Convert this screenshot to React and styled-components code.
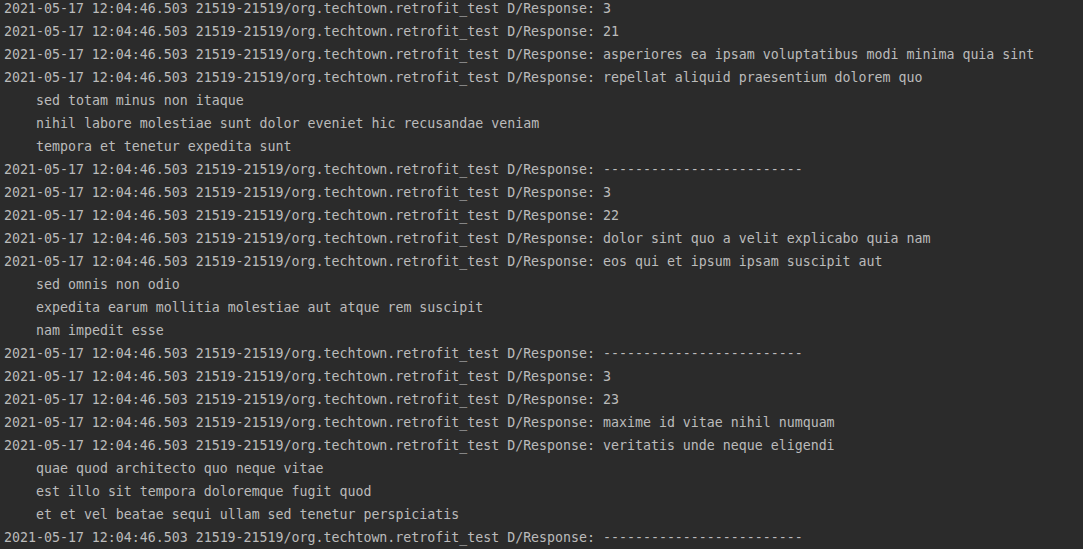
import React from "react";
import styled, { createGlobalStyle } from "styled-components";

const Global = createGlobalStyle`
  html, body { margin: 0; padding: 0; background: #2b2b2b; }
  body { overflow: hidden; }
`;

const Console = styled.div`
  background: #2b2b2b;
  width: 1083px;
  height: 549px;
  overflow: hidden;
  box-sizing: border-box;
  padding-left: 4px;
`;

const Lines = styled.div`
  margin-top: -3px;
  font-family: "DejaVu Sans Mono", "Liberation Mono", monospace;
  font-size: 13.28px;
  line-height: 23px;
  color: #bbbbbb;
  white-space: pre;
`;

const Line = styled.div`
  height: 23px;
  padding-left: ${(p) => (p.$cont ? "32px" : "0")};
`;

const P = "2021-05-17 12:04:46.503 21519-21519/org.techtown.retrofit_test D/Response: ";
const DASH = "-------------------------";

const data = [
  [0, "3"],
  [0, "21"],
  [0, "asperiores ea ipsam voluptatibus modi minima quia sint"],
  [0, "repellat aliquid praesentium dolorem quo"],
  [1, "sed totam minus non itaque"],
  [1, "nihil labore molestiae sunt dolor eveniet hic recusandae veniam"],
  [1, "tempora et tenetur expedita sunt"],
  [0, DASH],
  [0, "3"],
  [0, "22"],
  [0, "dolor sint quo a velit explicabo quia nam"],
  [0, "eos qui et ipsum ipsam suscipit aut"],
  [1, "sed omnis non odio"],
  [1, "expedita earum mollitia molestiae aut atque rem suscipit"],
  [1, "nam impedit esse"],
  [0, DASH],
  [0, "3"],
  [0, "23"],
  [0, "maxime id vitae nihil numquam"],
  [0, "veritatis unde neque eligendi"],
  [1, "quae quod architecto quo neque vitae"],
  [1, "est illo sit tempora doloremque fugit quod"],
  [1, "et et vel beatae sequi ullam sed tenetur perspiciatis"],
  [0, DASH],
];

export default function App() {
  return (
    <>
      <Global />
      <Console>
        <Lines>
          {data.map(([c, t], i) => (
            <Line key={i} $cont={!!c}>
              {c ? t : P + t}
            </Line>
          ))}
        </Lines>
      </Console>
    </>
  );
}
